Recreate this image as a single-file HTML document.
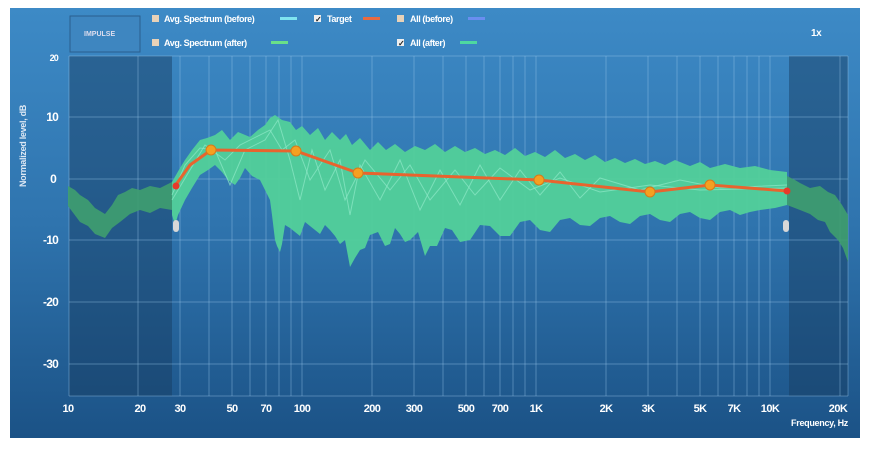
<!DOCTYPE html>
<html><head><meta charset="utf-8"><style>
body{margin:0;background:#fff;width:894px;height:458px;overflow:hidden;font-family:"Liberation Sans",sans-serif}
</style></head><body>
<svg width="894" height="458" viewBox="0 0 894 458" xmlns="http://www.w3.org/2000/svg" style="position:absolute;left:0;top:0">
<defs>
<linearGradient id="bg" x1="0" y1="0" x2="0" y2="1">
<stop offset="0" stop-color="#3d8ac6"/><stop offset="0.5" stop-color="#2f74ae"/><stop offset="1" stop-color="#1b5286"/>
</linearGradient>
</defs>
<rect x="10" y="8" width="850" height="430" fill="url(#bg)"/>
<rect x="69" y="56" width="103" height="340" fill="#173a5e" fill-opacity="0.45"/>
<rect x="789" y="56" width="59" height="340" fill="#173a5e" fill-opacity="0.45"/>
<g stroke="#9cc8ec" stroke-opacity="0.4" stroke-width="1">
<path d="M69 56V396M138 56V396M180 56V396M209 56V396M232 56V396M250 56V396M266 56V396M279 56V396M291 56V396M302 56V396M372 56V396M414 56V396M443 56V396M466 56V396M484 56V396M500 56V396M513 56V396M525 56V396M536 56V396M606 56V396M648 56V396M677 56V396M700 56V396M718 56V396M734 56V396M747 56V396M759 56V396M770 56V396M840 56V396M848 56V396"/>
<path d="M69 56H848M69 117H848M69 179H848M69 240H848M69 302H848M69 364H848M69 396H848"/>
</g>
<polygon fill="#3f9e6f" fill-opacity="0.9" points="68,186 75,190 80,195 88,200 95,208 105,214 112,205 118,195 125,192 132,188 140,190 150,186 160,188 172,182 172,210 160,208 150,213 140,210 130,214 120,222 112,228 105,238 95,234 88,226 80,222 74,214 68,206"/>
<polygon fill="#3f9e6f" fill-opacity="0.9" points="787,176 795,180 800,183 810,188 820,186 828,192 835,195 842,205 848,215 848,262 843,248 838,240 830,232 825,222 818,220 810,214 800,210 787,205"/>
<polygon fill="#52d09a" fill-opacity="0.95" points="172,182 180,168 185,160 192,150 200,140 207,138 215,135 222,130 230,140 238,132 250,137 258,130 265,125 270,118 275,115 282,120 290,122 296,130 302,126 310,135 318,128 325,140 332,132 340,140 346,134 352,145 360,138 370,150 378,142 386,150 395,144 405,152 415,146 425,150 435,144 445,152 455,146 465,152 475,148 485,154 495,150 505,155 515,148 525,156 535,152 545,157 555,150 565,158 575,154 585,160 595,155 605,162 615,158 625,163 635,159 645,164 655,161 665,165 675,160 690,166 700,162 710,168 725,164 740,168 755,166 770,170 787,172 787,205 775,208 760,210 750,212 740,215 730,210 720,212 710,220 700,218 690,212 680,214 670,222 660,220 650,214 640,216 630,224 620,222 610,216 600,218 590,226 580,225 570,218 560,220 550,232 540,230 530,220 520,222 510,236 500,236 490,226 480,225 470,240 460,242 452,230 445,228 437,246 430,246 425,256 418,232 410,240 405,242 400,234 395,228 390,244 385,246 378,232 370,235 365,248 360,250 355,258 350,267 345,240 340,244 335,236 330,230 325,225 320,234 315,230 310,226 305,222 300,236 295,232 290,228 285,225 282,244 280,252 277,246 275,240 272,215 270,200 265,190 260,180 252,176 245,168 240,178 235,185 228,180 222,172 215,165 208,170 200,175 192,188 185,200 178,215 175,225 172,215"/>
<g fill="none" stroke="#8ee8c8" stroke-width="1" stroke-opacity="0.7">
<polyline points="172,195 185,165 200,148 215,150 230,185 245,150 265,140 278,120 290,160 300,200 312,150 325,190 340,160 350,215 360,165 380,200 400,160 420,210 440,170 460,205 480,165 500,200 520,170 540,195 560,172 580,198 600,178 640,190 680,180 720,188 787,185"/>
<polyline points="172,200 190,170 205,145 225,160 240,145 270,130 282,150 295,140 310,180 330,150 345,200 365,160 390,190 410,165 430,200 455,170 475,195 500,168 530,190 560,178 600,192 650,185 700,190 787,188"/>
</g>
<polyline fill="none" stroke="#e8642e" stroke-width="3" points="175,186 190,165 211,150 296,151 358,173 539,180 650,192 710,185 787,191"/>
<g fill="#f5a020" stroke="#d67a1a" stroke-width="1">
<circle cx="211" cy="150" r="5"/><circle cx="296" cy="151" r="5"/><circle cx="358" cy="173" r="5"/><circle cx="539" cy="180" r="5"/><circle cx="650" cy="192" r="5"/><circle cx="710" cy="185" r="5"/>
</g>
<circle cx="176" cy="186" r="3.5" fill="#e83a2a"/>
<circle cx="787" cy="191" r="3.5" fill="#e83a2a"/>
<rect x="173" y="220" width="6" height="12" rx="3" fill="#d8d8d8"/>
<rect x="783" y="220" width="6" height="12" rx="3" fill="#d8d8d8"/>
<rect x="70" y="16" width="70" height="36" fill="#3e86c0" stroke="#2a5f8e"/>
<text x="84" y="36" font-size="7" fill="#dde" font-weight="bold">IMPULSE</text>
<g font-size="9" fill="#fff" font-weight="bold" letter-spacing="-0.4">
<rect x="152" y="15" width="7" height="7" fill="#e8d2b8"/><text x="164" y="22">Avg. Spectrum (before)</text><rect x="280" y="17" width="17" height="3" fill="#7fe4f0"/>
<rect x="314" y="15" width="7" height="7" fill="#eee"/><text x="315" y="22" font-size="8" fill="#222">✓</text><text x="327" y="22">Target</text><rect x="363" y="17" width="17" height="3" fill="#e86a40"/>
<rect x="397" y="15" width="7" height="7" fill="#e8d2b8"/><text x="410" y="22">All (before)</text><rect x="468" y="17" width="17" height="3" fill="#6a8ef0"/>
<rect x="152" y="39" width="7" height="7" fill="#e8d2b8"/><text x="164" y="46">Avg. Spectrum (after)</text><rect x="271" y="41" width="17" height="3" fill="#6ae088"/>
<rect x="397" y="39" width="7" height="7" fill="#eee"/><text x="398" y="46" font-size="8" fill="#222">✓</text><text x="410" y="46">All (after)</text><rect x="460" y="41" width="17" height="3" fill="#4ed8a0"/>
<text x="811" y="36" font-size="10">1x</text>
</g>
<g font-size="12" fill="#fff" text-anchor="end" font-weight="bold" letter-spacing="-0.8">
<text x="58" y="61" font-size="9">20</text><text x="58" y="121">10</text><text x="56" y="183">0</text><text x="58" y="244">-10</text><text x="58" y="306">-20</text><text x="58" y="368">-30</text>
</g>
<text transform="translate(26,146) rotate(-90)" font-size="9" fill="#dde8f4" text-anchor="middle" font-weight="bold" letter-spacing="-0.3">Normalized level, dB</text>
<g font-size="11" fill="#fff" text-anchor="middle" font-weight="bold" letter-spacing="-0.6">
<text x="68" y="412">10</text><text x="140" y="412">20</text><text x="180" y="412">30</text><text x="232" y="412">50</text><text x="266" y="412">70</text><text x="302" y="412">100</text><text x="372" y="412">200</text><text x="414" y="412">300</text><text x="466" y="412">500</text><text x="500" y="412">700</text><text x="536" y="412">1K</text><text x="606" y="412">2K</text><text x="648" y="412">3K</text><text x="700" y="412">5K</text><text x="734" y="412">7K</text><text x="770" y="412">10K</text><text x="838" y="412">20K</text>
</g>
<text x="848" y="426" font-size="9" fill="#fff" text-anchor="end" font-weight="bold" letter-spacing="-0.3">Frequency, Hz</text>
</svg>
</body></html>
